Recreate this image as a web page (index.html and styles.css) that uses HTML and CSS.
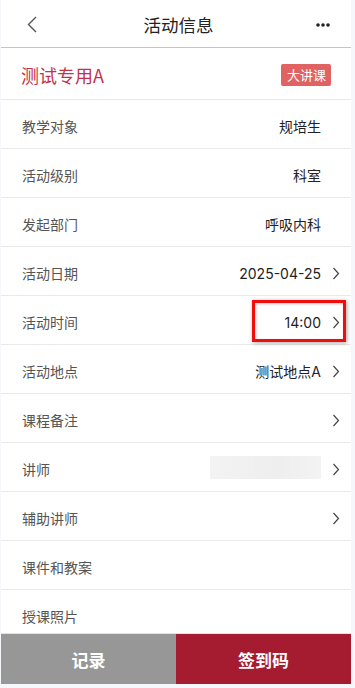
FILE: index.html
```html
<!DOCTYPE html>
<html lang="zh-CN">
<head>
<meta charset="utf-8">
<title>活动信息</title>
<link rel="stylesheet" href="styles.css">
</head>
<body>
<div class="page">
  <header class="nav">
    <span class="nav-back">
      <svg width="10" height="17" viewBox="0 0 10 17"><polyline points="9,1 1.5,8.5 9,16" fill="none" stroke="#555" stroke-width="1.4"/></svg>
    </span>
    <h1 class="nav-title">活动信息</h1>
    <span class="nav-more">
      <svg width="14" height="4" viewBox="0 0 14 4"><circle cx="2" cy="2" r="1.8" fill="#222"/><circle cx="7" cy="2" r="1.8" fill="#222"/><circle cx="12" cy="2" r="1.8" fill="#222"/></svg>
    </span>
  </header>
  <main class="content">
    <div class="title-row">
      <span class="title-text">测试专用A</span>
      <span class="badge">大讲课</span>
    </div>
    <div class="row"><span class="label">教学对象</span><span class="value">规培生</span><span class="arrow-space"></span></div>
    <div class="row"><span class="label">活动级别</span><span class="value">科室</span><span class="arrow-space"></span></div>
    <div class="row"><span class="label">发起部门</span><span class="value">呼吸内科</span><span class="arrow-space"></span></div>
    <div class="row"><span class="label">活动日期</span><span class="value">2025-04-25</span><span class="arrow"><svg width="8" height="13" viewBox="0 0 8 13"><polyline points="1.5,1 6.5,6.5 1.5,12" fill="none" stroke="#444" stroke-width="1.2"/></svg></span></div>
    <div class="row highlighted"><span class="label">活动时间</span><span class="value">14:00</span><span class="arrow"><svg width="8" height="13" viewBox="0 0 8 13"><polyline points="1.5,1 6.5,6.5 1.5,12" fill="none" stroke="#444" stroke-width="1.2"/></svg></span><span class="mark"></span></div>
    <div class="row"><span class="label">活动地点</span><span class="value">测试地点A</span><span class="arrow"><svg width="8" height="13" viewBox="0 0 8 13"><polyline points="1.5,1 6.5,6.5 1.5,12" fill="none" stroke="#444" stroke-width="1.2"/></svg></span></div>
    <div class="row"><span class="label">课程备注</span><span class="value"></span><span class="arrow"><svg width="8" height="13" viewBox="0 0 8 13"><polyline points="1.5,1 6.5,6.5 1.5,12" fill="none" stroke="#444" stroke-width="1.2"/></svg></span></div>
    <div class="row"><span class="label">讲师</span><span class="value"><span class="blur"></span></span><span class="arrow"><svg width="8" height="13" viewBox="0 0 8 13"><polyline points="1.5,1 6.5,6.5 1.5,12" fill="none" stroke="#444" stroke-width="1.2"/></svg></span></div>
    <div class="row"><span class="label">辅助讲师</span><span class="value"></span><span class="arrow"><svg width="8" height="13" viewBox="0 0 8 13"><polyline points="1.5,1 6.5,6.5 1.5,12" fill="none" stroke="#444" stroke-width="1.2"/></svg></span></div>
    <div class="row"><span class="label">课件和教案</span></div>
    <div class="row last"><span class="label">授课照片</span></div>
  </main>
  <footer class="footer">
    <button class="btn btn-gray">记录</button>
    <button class="btn btn-red">签到码</button>
  </footer>
</div>
</body>
</html>
```

FILE: styles.css
```css
* { box-sizing: border-box; }
html, body {
  margin: 0;
  padding: 0;
  background: #f6f7fb;
}
body {
  font-family: "Noto Sans CJK SC", "Noto Sans", sans-serif;
  color: #333;
}
.page {
  width: 350px;
  margin-left: 1px;
  height: 684px;
  background: #fff;
  display: flex;
  flex-direction: column;
}
.nav {
  height: 48px;
  flex: 0 0 48px;
  border-bottom: 1px solid #c4c4c4;
  display: flex;
  align-items: center;
  justify-content: space-between;
  padding: 0 21px 0 26px;
}
.nav-back, .nav-more {
  width: 14px;
  display: flex;
  align-items: center;
}
.nav-back { padding-top: 2px; }
.nav-more { padding-top: 2px; }
.nav-title {
  margin: 0;
  font-size: 17.5px;
  font-weight: 400;
  color: #222;
  line-height: 24px;
  padding-top: 2px;
}
.content {
  flex: 1;
  overflow: hidden;
  border-bottom: 1px solid #e2e2e2;
}
.title-row {
  height: 52px;
  border-bottom: 1px solid #e8e8e8;
  display: flex;
  align-items: center;
  justify-content: space-between;
  padding: 2px 20px 0 20px;
}
.title-text {
  font-size: 18px;
  color: #c4314a;
}
.badge {
  background: #e06262;
  color: #fff;
  font-size: 13px;
  line-height: 22px;
  height: 22px;
  padding: 0 5px 0 6px;
  border-radius: 2px;
}
.row {
  position: relative;
  height: 49px;
  border-bottom: 1px solid #e9e9e9;
  display: flex;
  align-items: center;
  padding: 4px 10px 0 21px;
}
.label {
  font-size: 14px;
  color: #555;
  flex: 1;
}
.value {
  font-family: "Inter", "Noto Sans CJK SC", sans-serif;
  font-size: 14px;
  color: #222;
  display: flex;
  align-items: center;
}
.arrow, .arrow-space {
  width: 20px;
  display: flex;
  justify-content: flex-end;
  align-items: center;
}
.arrow { padding-right: 1px; }
.blur {
  display: block;
  width: 111px;
  height: 23px;
  margin-top: -3px;
  background: linear-gradient(90deg, #f3f3f3, #eeeeee 60%, #f3f3f3);
}
.mark {
  position: absolute;
  left: 251px;
  top: 4px;
  width: 94px;
  height: 42px;
  border: 3px solid #f20d0d;
  box-shadow: 1px 1px 4px rgba(0,0,0,0.35), inset 1px 1px 3px rgba(0,0,0,0.2);
}
.footer {
  flex: 0 0 50px;
  display: flex;
}
.btn {
  flex: 1;
  border: 0;
  margin: 0;
  font-family: inherit;
  font-size: 17px;
  font-weight: 700;
  color: #fff;
  padding: 0;
}
.btn-gray { background: #979797; }
.btn-red { background: #a51b30; }
```
